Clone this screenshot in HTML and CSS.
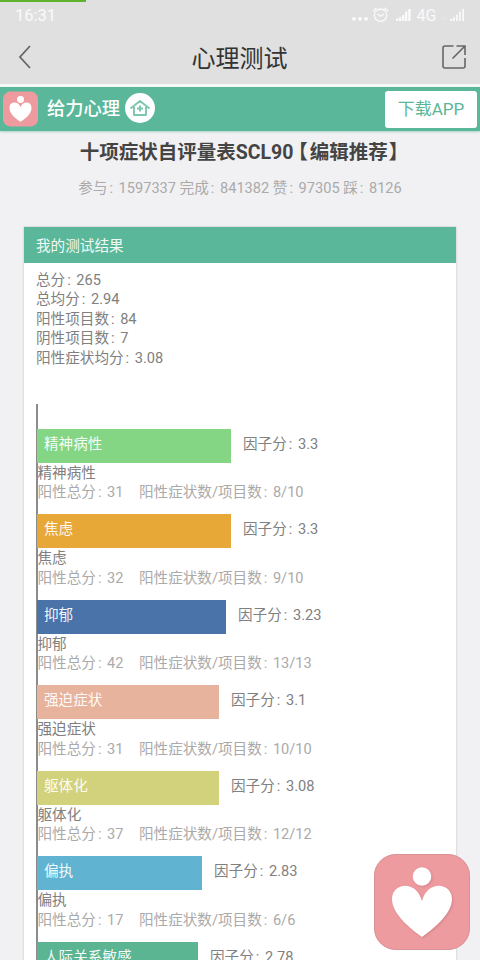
FILE: index.html
```html
<!DOCTYPE html>
<html lang="zh-CN">
<head>
<meta charset="utf-8">
<title>心理测试</title>
<link rel="stylesheet" href="styles.css">
</head>
<body>
<header class="top">
  <div class="progress"></div>
  <div class="status">
    <span class="time">16:31</span>
    <svg class="status-icons" width="116" height="20" viewBox="0 0 116 20" fill="#fafafa">
      <circle cx="4" cy="12.800" r="1.900"/><circle cx="10" cy="12.800" r="1.900"/><circle cx="16" cy="12.800" r="1.900"/>
      <g fill="none" stroke="#fafafa" stroke-width="1.300" stroke-linecap="round"><circle cx="30.500" cy="9.200" r="6.200"/><path d="M28 8.200l2.500 2 3-2M23.300 4.700l3-2.600M37.700 4.700l-3-2.600"/></g>
      <path d="M46 15v-2l2.300-.8V15zM49 15v-3.500l2.300-1V15zM52 15V9.500l2.300-1V15zM55 15V6l2.300-1v10zM58.200 15V3h2.400v12z"/>
      <path d="M100 15v-2l2-.5V15zM103 15v-3.500l1.700-.8V15zM106 15V9l1.700-.8V15zM109 15V6l1.700-1v10zM112.300 15V3h1.700v12z"/>
      <path opacity=".35" d="M91 13l1.500-4v4zM94 13l1.500-4v4z"/>
      <text class="net" x="66.500" y="15">4G</text>
    </svg>
  </div>
  <nav class="nav">
    <svg width="14" height="26" viewBox="0 0 14 26" fill="none" stroke="#666" stroke-width="1.800"><path d="M12 2L2 13l10 11"/></svg>
    <h1>心理测试</h1>
    <svg width="26" height="26" viewBox="0 0 26 26" fill="none" stroke="#666" stroke-width="1.600"><path d="M12.500 2H4Q2 2 2 4V22Q2 24 4 24H22Q24 24 24 22V14M15.500 2H24V11M24 2L11.500 14.500"/></svg>
  </nav>
</header>
<div class="brand">
  <svg class="logo" width="35" height="36" viewBox="0 0 96 96"><rect width="96" height="96" rx="20" fill="#ee9ba0"/><circle cx="48" cy="22" r="9.500" fill="#fff"/><path fill="#fff" d="M48 83C34 74 18 61 18 45C18 27 41 25 48 43C55 25 78 27 78 45C78 61 62 74 48 83Z"/></svg>
  <span class="brand-name">给力心理</span>
  <svg class="home" width="30" height="30" viewBox="0 0 30 30"><circle cx="15" cy="15" r="15" fill="#fff"/><g fill="none" stroke="#5bb79a" stroke-width="1.900" stroke-linejoin="round" opacity=".8"><path d="M9 14v8h12v-8M5.500 15.500L15 8 24.500 15.500M15 12.500v6M12 15.500h6"/></g></svg>
  <a class="download">下载APP</a>
</div>
<main>
  <h2>十项症状自评量表SCL90<span class="bracket">【</span>编辑推荐<span class="bracket-end">】</span></h2>
  <p class="meta">参与<i>:</i> 1597337 完成<i>:</i> 841382 赞<i>:</i> 97305 踩<i>:</i> 8126</p>
  <section class="card">
    <h3>我的测试结果</h3>
    <div class="summary">
      <p>总分<i>:</i> 265</p>
      <p>总均分<i>:</i> 2.94</p>
      <p>阳性项目数<i>:</i> 84</p>
      <p>阴性项目数<i>:</i> 7</p>
      <p>阳性症状均分<i>:</i> 3.08</p>
    </div>
    <div class="chart">
      <div class="item"><div class="row"><div class="bar green" style="width:193.500px">精神病性</div><span>因子分<i>:</i> 3.3</span></div><p>精神病性</p><p class="detail"><span>阳性总分<i>:</i> 31</span><span>阳性症状数/项目数<i>:</i> 8/10</span></p></div>
      <div class="item"><div class="row"><div class="bar orange" style="width:193.500px">焦虑</div><span>因子分<i>:</i> 3.3</span></div><p>焦虑</p><p class="detail"><span>阳性总分<i>:</i> 32</span><span>阳性症状数/项目数<i>:</i> 9/10</span></p></div>
      <div class="item"><div class="row"><div class="bar blue" style="width:188.500px">抑郁</div><span>因子分<i>:</i> 3.23</span></div><p>抑郁</p><p class="detail"><span>阳性总分<i>:</i> 42</span><span>阳性症状数/项目数<i>:</i> 13/13</span></p></div>
      <div class="item"><div class="row"><div class="bar pink" style="width:181.500px">强迫症状</div><span>因子分<i>:</i> 3.1</span></div><p>强迫症状</p><p class="detail"><span>阳性总分<i>:</i> 31</span><span>阳性症状数/项目数<i>:</i> 10/10</span></p></div>
      <div class="item"><div class="row"><div class="bar olive" style="width:181.500px">躯体化</div><span>因子分<i>:</i> 3.08</span></div><p>躯体化</p><p class="detail"><span>阳性总分<i>:</i> 37</span><span>阳性症状数/项目数<i>:</i> 12/12</span></p></div>
      <div class="item"><div class="row"><div class="bar sky" style="width:164.500px">偏执</div><span>因子分<i>:</i> 2.83</span></div><p>偏执</p><p class="detail"><span>阳性总分<i>:</i> 17</span><span>阳性症状数/项目数<i>:</i> 6/6</span></p></div>
      <div class="item"><div class="row"><div class="bar teal" style="width:160.500px">人际关系敏感</div><span>因子分<i>:</i> 2.78</span></div></div>
    </div>
  </section>
</main>
<svg class="float" width="96" height="96" viewBox="0 0 96 96"><rect width="96" height="96" rx="22" fill="#ee9ba0"/><rect x=".5" y=".5" width="95" height="95" rx="21.500" fill="none" stroke="#c98a8e" opacity=".6"/><g class="heart" fill="#fff"><circle cx="48" cy="22.500" r="9.300"/><path d="M48 83C34 73 18 59 18 45C18 29 42 25 48 47C54 25 78 29 78 45C78 59 62 73 48 83Z"/></g></svg>
</body>
</html>
```

FILE: styles.css
```css
* { box-sizing: border-box; }
body {
  margin: 0;
  height: 960px;
  overflow: hidden;
  background: #f1f1f3;
  color: #808080;
  font: 14.6px/19.55px Roboto, "Noto Sans CJK SC", sans-serif;
}
h1, h2, h3, p { margin: 0; font-weight: 400; }
i { font-style: normal; margin: 0 2px; }

.top { height: 87px; background: #e0e0e0; border-bottom: 3px solid #f7faf9; }
.progress { width: 86px; height: 2px; background: #5eb52b; }
.status { height: 28px; padding: 4px 14px 0 15px; display: flex; justify-content: space-between; color: #fafafa; }
.time { font-size: 16.5px; line-height: 20px; }
.status-icons { flex: none; }
.net { font: 16px Roboto, sans-serif; }
.nav { height: 54px; padding: 0 13px 0 18px; display: flex; align-items: center; justify-content: space-between; }
.nav h1 { font-size: 24px; line-height: 30px; color: #333; margin: 3px 0 0 6px; }

.brand { height: 44px; background: #5bb79a; display: flex; align-items: center; padding: 0 3px; box-shadow: 0 1px 2px #5bb79a80; }
.brand-name { margin: 0 5px 0 9px; font-size: 18.3px; font-weight: 500; line-height: 22px; color: #fff; }
.home { position: relative; top: -1px; }
.download { margin-left: auto; width: 92px; height: 37px; border-radius: 3px; background: #fff; color: #5bb79a; font-size: 17px; line-height: 36px; text-align: center; }

h2 { margin-top: 10px; height: 24px; line-height: 24px; font-size: 19.5px; font-weight: 700; color: #444; text-align: center; white-space: nowrap; }
.bracket { margin: 0 2px 0 -5px; }
.bracket-end { margin: 0 -8px 0 1px; }
.meta { margin-top: 14px; height: 20px; text-align: center; color: #aaa; white-space: nowrap; }
.card { margin: 27.5px 24px 0; height: 760px; background: #fff; box-shadow: 0 0 2px #bbb; }
h3 { height: 36.5px; padding-left: 12px; background: #5bb79a; color: #eefaf5; font-size: 14.6px; line-height: 38px; }
.summary { padding: 7.5px 12px 0; height: 141px; }
.chart { margin-left: 12px; border-left: 2px solid #8c8c8c; padding-top: 24.5px; height: 580px; }
.item { height: 85.5px; margin-left: -1px; }
.item p { position: relative; top: 1px; left: .5px; }
.row { display: flex; gap: 12.5px; height: 34px; line-height: 30px; }
.bar { padding-left: 7px; color: #fffffff0; }
.green { background: #84d684; }
.orange { background: #e8a838; }
.blue { background: #4a73aa; }
.pink { background: #e8b39c; }
.olive { background: #d3d27c; }
.sky { background: #61b4d1; }
.teal { background: #5bb592; }
.detail { display: flex; gap: 15.5px; color: #aaa; }
.float { position: absolute; left: 374px; top: 854px; }
.heart { filter: drop-shadow(1px 1px 1px #b66c7280); }
```
